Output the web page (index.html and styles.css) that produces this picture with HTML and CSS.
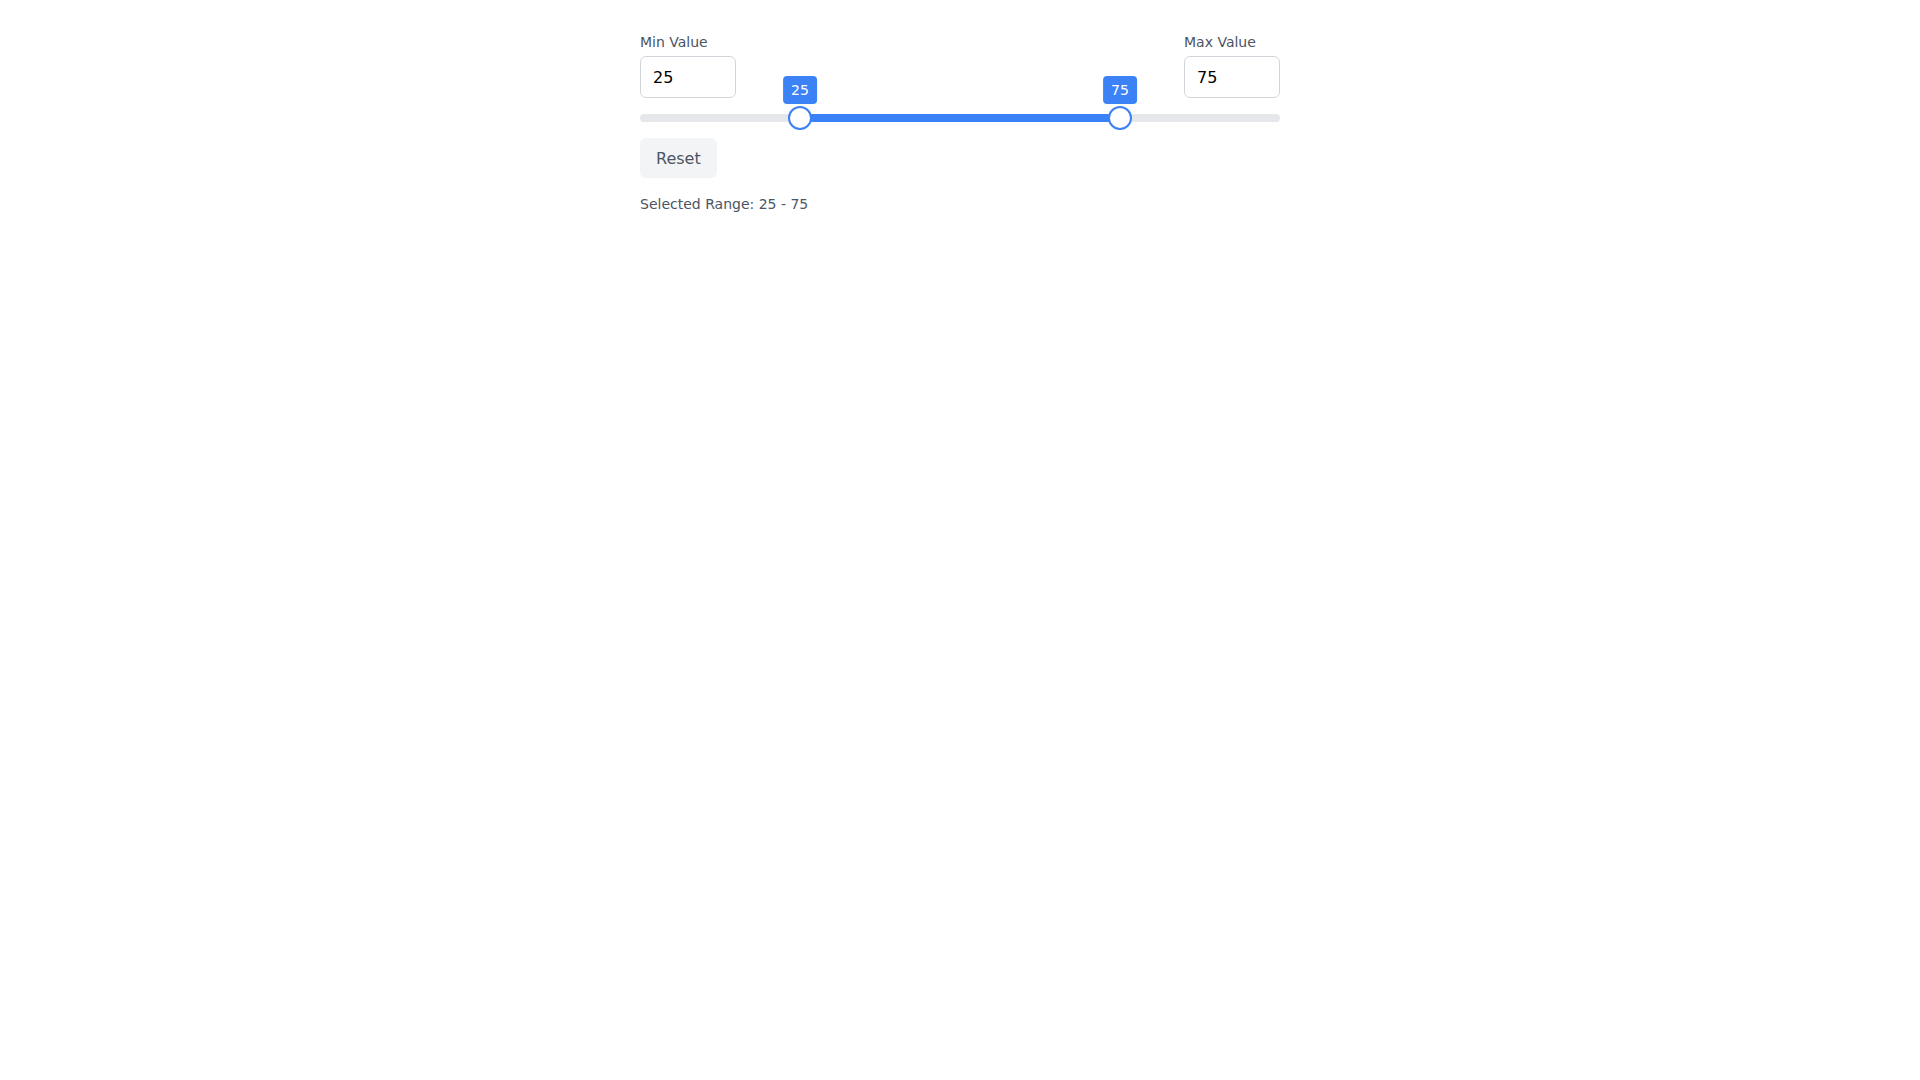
FILE: index.html
```html
<!DOCTYPE html>
<html>
<head>
    <meta charset="utf-8">
    <link rel="stylesheet" href="styles.css">
</head>
<body>
    <div class="range-picker">
        <div class="inputs">
            <div class="field">
                <label for="min-value">Min Value</label>
                <input id="min-value" type="number" value="25">
            </div>
            <div class="field">
                <label for="max-value">Max Value</label>
                <input id="max-value" type="number" value="75">
            </div>
        </div>

        <div class="track">
            <div class="fill" style="left: 25%; width: 50%;"></div>
            <div class="thumb" style="left: 25%;">
                <span class="bubble">25</span>
            </div>
            <div class="thumb" style="left: 75%;">
                <span class="bubble">75</span>
            </div>
        </div>

        <button class="reset">Reset</button>

        <p class="summary">Selected Range: 25 - 75</p>
    </div>
</body>
</html>
```
FILE: styles.css
```css
html,
body {
    margin: 0;
    background: #ffffff;
    font-family: "DejaVu Sans", sans-serif;
}

.range-picker {
    width: 640px;
    margin: 0 auto;
    padding-top: 32px;
}

.inputs {
    display: flex;
    justify-content: space-between;
}

.field {
    display: flex;
    flex-direction: column;
    gap: 4px;
}

.field label {
    font-size: 14px;
    line-height: 20px;
    color: #4b5563;
}

.field input {
    box-sizing: border-box;
    width: 96px;
    height: 42px;
    padding: 8px 12px;
    border: 1px solid #d1d5db;
    border-radius: 6px;
    font-family: inherit;
    font-size: 16px;
    line-height: 24px;
    color: #000000;
    outline: none;
    -moz-appearance: textfield;
}

.field input::-webkit-inner-spin-button,
.field input::-webkit-outer-spin-button {
    -webkit-appearance: none;
    margin: 0;
}

.track {
    position: relative;
    height: 8px;
    margin-top: 16px;
    border-radius: 4px;
    background: #e5e7eb;
}

.fill {
    position: absolute;
    top: 0;
    bottom: 0;
    background: #3b82f6;
}

.thumb {
    position: absolute;
    top: 50%;
    width: 24px;
    height: 24px;
    box-sizing: border-box;
    margin-left: -12px;
    margin-top: -12px;
    border: 2px solid #3b82f6;
    border-radius: 50%;
    background: #ffffff;
}

.bubble {
    position: absolute;
    bottom: 24px;
    left: 50%;
    transform: translateX(-50%);
    padding: 4px 8px;
    border-radius: 4px;
    background: #3b82f6;
    color: #ffffff;
    font-size: 14px;
    line-height: 20px;
    white-space: nowrap;
}

.reset {
    display: block;
    margin-top: 16px;
    height: 40px;
    padding: 0 16px;
    border: none;
    border-radius: 6px;
    background: #f3f4f6;
    color: #4b5563;
    font-family: inherit;
    font-size: 16px;
}

.summary {
    margin: 16px 0 0;
    font-size: 14px;
    line-height: 20px;
    color: #4b5563;
}
```
